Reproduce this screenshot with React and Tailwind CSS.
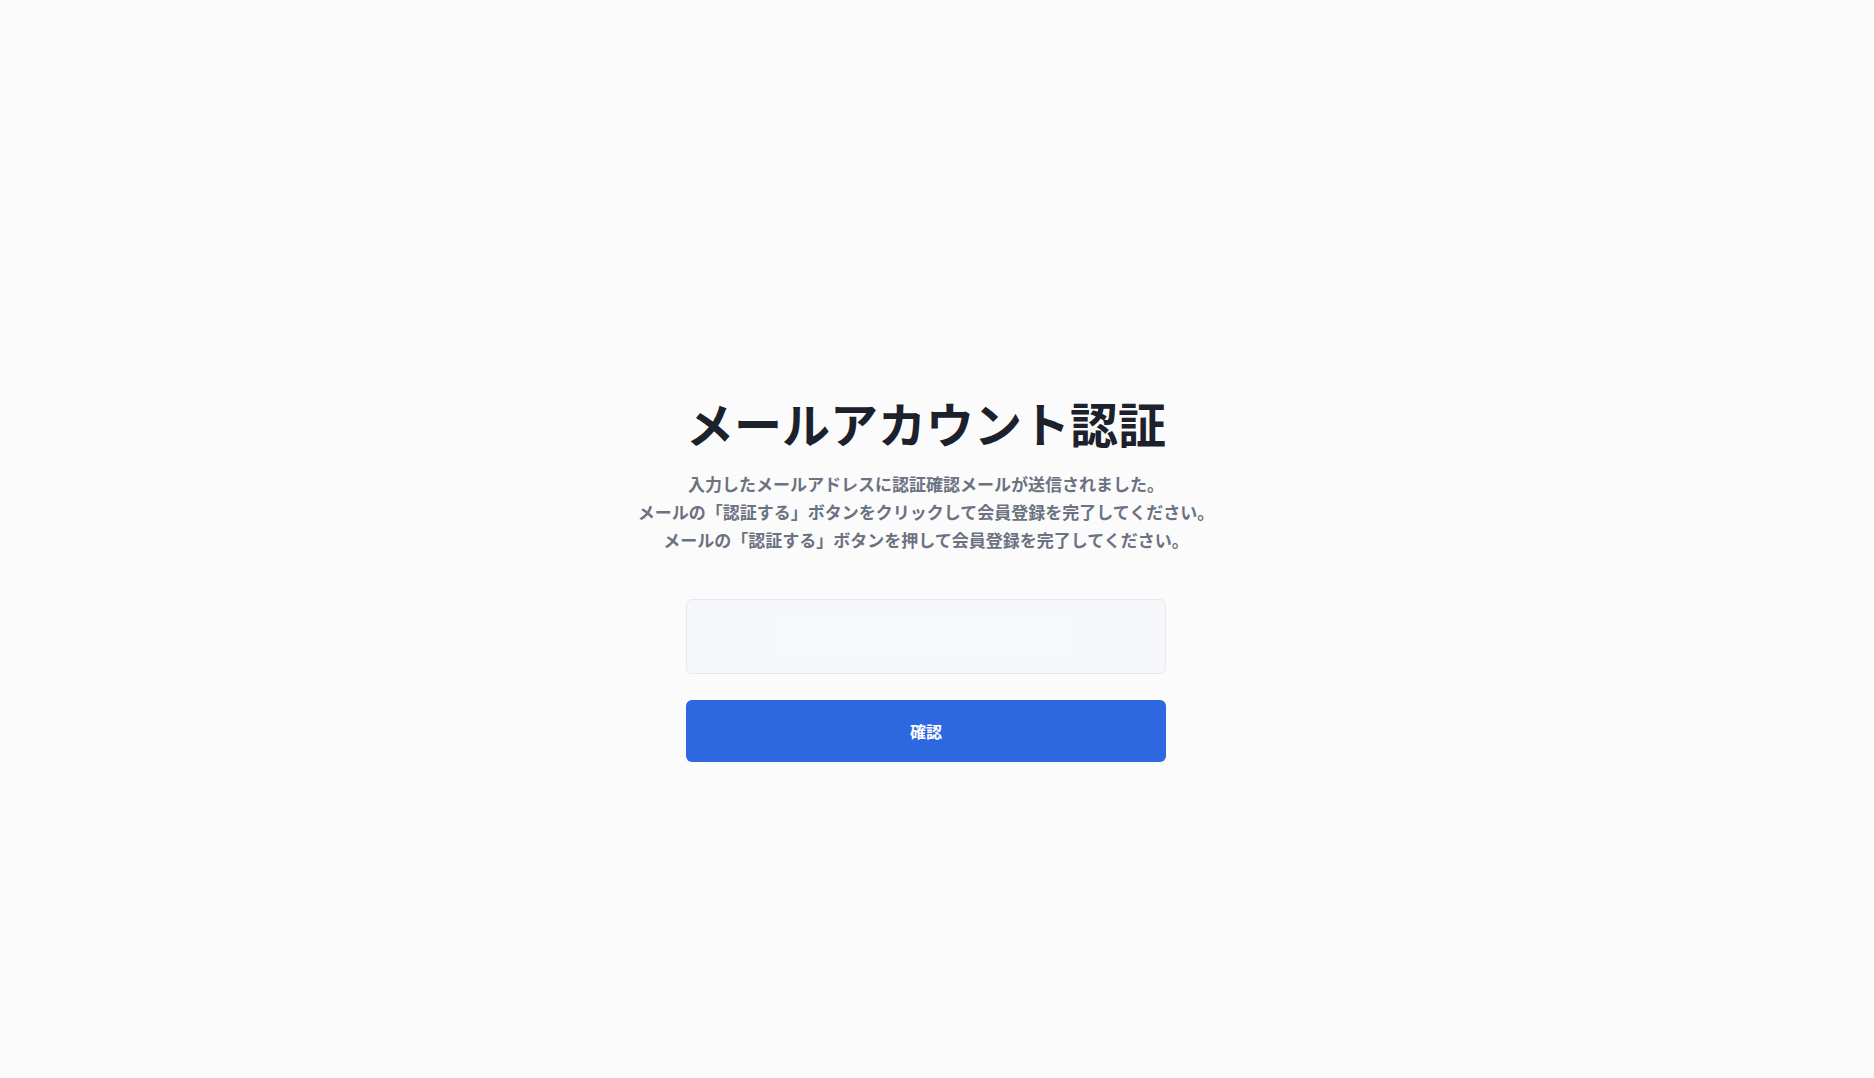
import React from "react";

const font = {
  fontFamily: '"Noto Sans CJK JP", "Noto Sans", sans-serif',
};

function VerifyBox() {
  return (
    <div className="w-full h-[75px] rounded-md border border-[#e6e8ec] bg-[#f6f7fa] flex items-center justify-center">
      <div className="w-[300px] h-[49px] bg-[#f7f8fb]" />
    </div>
  );
}

export default function App() {
  return (
    <div
      className="min-h-screen w-full bg-[#fbfbfc] flex justify-center pr-[22px] pt-[398px]"
      style={font}
    >
      <div className="flex flex-col items-center">
        <h1 className="text-5xl leading-none font-bold text-[#1c212b]">
          メールアカウント認証
        </h1>

        <p className="mt-[24px] text-center text-[17px] leading-[28px] font-semibold text-[#6b7280]">
          入力したメールアドレスに認証確認メールが送信されました。
          <br />
          メールの「認証する」ボタンをクリックして会員登録を完了してください。
          <br />
          メールの「認証する」ボタンを押して会員登録を完了してください。
        </p>

        <div className="mt-[45px] w-[480px] flex flex-col gap-[26px]">
          <VerifyBox />
          <button
            type="button"
            className="h-[62px] w-full rounded-md bg-[#2e68e0] text-white text-base font-bold"
          >
            確認
          </button>
        </div>
      </div>
    </div>
  );
}
